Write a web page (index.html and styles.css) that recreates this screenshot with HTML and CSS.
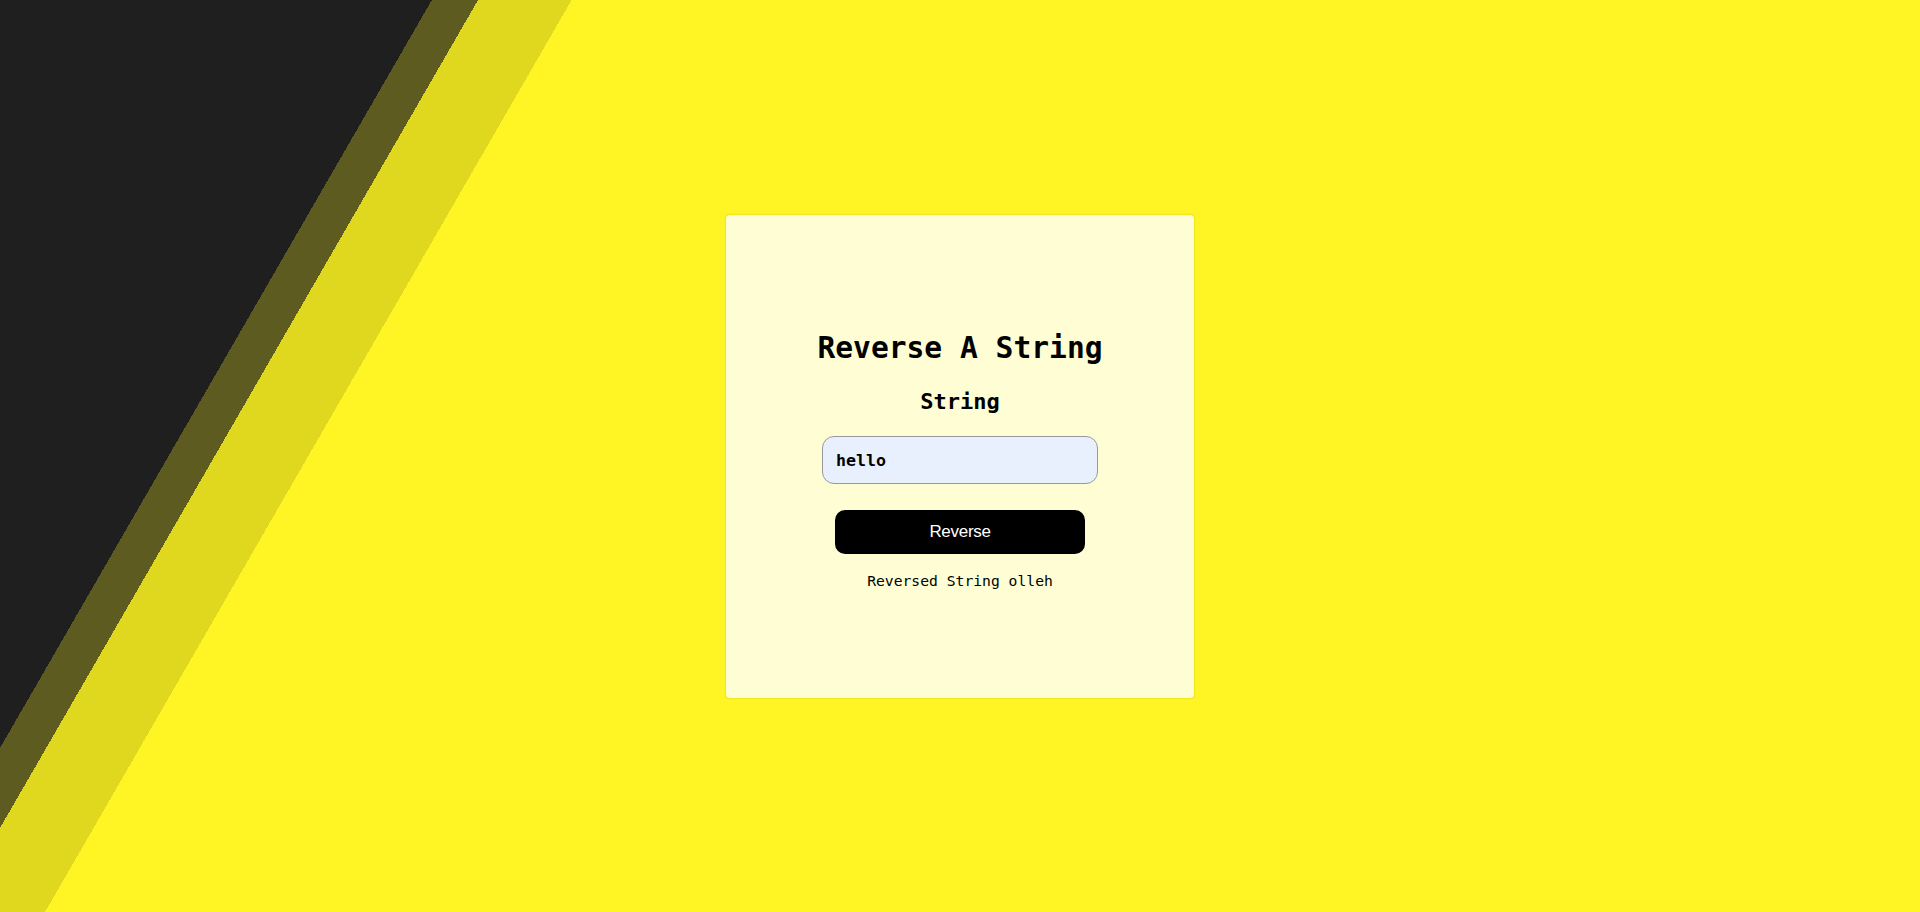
FILE: index.html
```html
<!DOCTYPE html>
<html lang="en">
<head>
<meta charset="utf-8">
<title>Reverse A String</title>
<link rel="stylesheet" href="styles.css">
</head>
<body>
  <main class="page">
    <section class="card">
      <h1 class="title">Reverse A String</h1>
      <h2 class="label">String</h2>
      <input class="field" type="text" value="hello">
      <button class="btn" type="button">Reverse</button>
      <p class="result">Reversed String olleh</p>
    </section>
  </main>
</body>
</html>
```

FILE: styles.css
```css
* { box-sizing: border-box; }

html, body {
  margin: 0;
  padding: 0;
  height: 100%;
}

body {
  background: linear-gradient(120deg,
    #1f1f1f 0px, #1f1f1f 374px,
    #5e5b21 374px, #5e5b21 414px,
    #e0d71f 414px, #e0d71f 495px,
    #fff424 495px, #fff424 100%);
  font-family: "DejaVu Sans Mono", monospace;
}

.page {
  height: 912px;
  display: flex;
  align-items: center;
  justify-content: center;
}

.card {
  width: 468px;
  height: 483px;
  margin-top: 1px;
  background: #fffdd3;
  border-radius: 4px;
  box-shadow: 0 0 2px rgba(120, 110, 0, 0.35);
  display: flex;
  flex-direction: column;
  align-items: center;
  padding-top: 115px;
}

.title {
  margin: 0;
  font-size: 29.6px;
  line-height: 36px;
  font-weight: bold;
  color: #000;
}

.label {
  margin: 22px 0 0;
  font-size: 22px;
  line-height: 28px;
  font-weight: bold;
  color: #000;
}

.field {
  margin-top: 20px;
  width: 276px;
  height: 48px;
  border: 1px solid #9a9a9a;
  border-radius: 12px;
  background: #e8f0fe;
  padding: 0 0 0 13px;
  font-family: "DejaVu Sans Mono", monospace;
  font-size: 16.6px;
  font-weight: bold;
  color: #000;
  outline: none;
}

.btn {
  margin-top: 26px;
  width: 250px;
  height: 44px;
  border: none;
  border-radius: 10px;
  background: #000;
  color: #fff;
  font-family: "Liberation Sans", Arial, sans-serif;
  font-size: 17px;
  letter-spacing: -0.3px;
  cursor: pointer;
}

.result {
  margin: 17px 0 0;
  font-size: 14.7px;
  line-height: 20px;
  color: #000;
}
```
